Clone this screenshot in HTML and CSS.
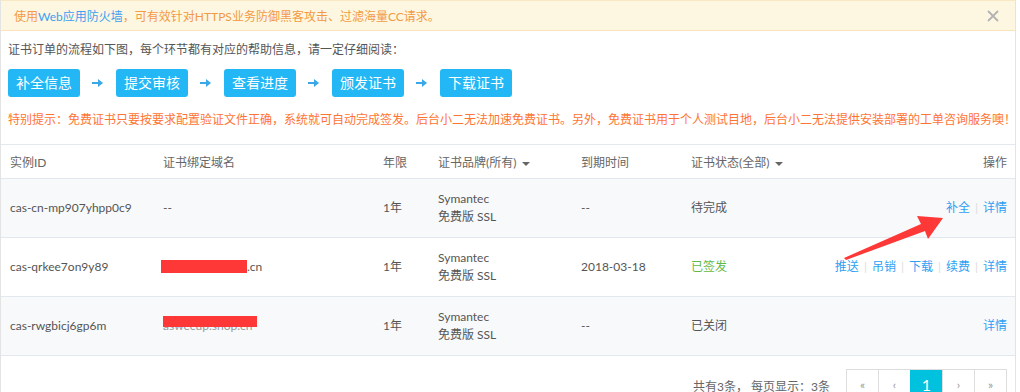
FILE: index.html
```html
<!DOCTYPE html>
<html>
<head>
    <title>证书订单</title>
    <link rel="stylesheet" href="styles.css">
</head>
<body>
    <div class="page">
        <div class="notice">
            <span>使用<a class="notice-link">Web应用防火墙</a>，可有效针对HTTPS业务防御黑客攻击、过滤海量CC请求。</span>
            <svg class="notice-close" width="12" height="12" viewBox="0 0 12 12">
                <path d="M1 1 L11 11 M11 1 L1 11" stroke="#b3b3b3" stroke-width="1.8" fill="none"/>
            </svg>
        </div>

        <div class="intro">证书订单的流程如下图，每个环节都有对应的帮助信息，请一定仔细阅读：</div>

        <div class="steps">
            <div class="step">补全信息</div>
            <svg class="step-arrow" width="11" height="8" viewBox="0 0 11 8"><path d="M0 3 H6 V0 L11 4 L6 8 V5 H0 Z" fill="#3aa7e8"/></svg>
            <div class="step">提交审核</div>
            <svg class="step-arrow" width="11" height="8" viewBox="0 0 11 8"><path d="M0 3 H6 V0 L11 4 L6 8 V5 H0 Z" fill="#3aa7e8"/></svg>
            <div class="step">查看进度</div>
            <svg class="step-arrow" width="11" height="8" viewBox="0 0 11 8"><path d="M0 3 H6 V0 L11 4 L6 8 V5 H0 Z" fill="#3aa7e8"/></svg>
            <div class="step">颁发证书</div>
            <svg class="step-arrow" width="11" height="8" viewBox="0 0 11 8"><path d="M0 3 H6 V0 L11 4 L6 8 V5 H0 Z" fill="#3aa7e8"/></svg>
            <div class="step">下载证书</div>
        </div>

        <div class="warning">特别提示：免费证书只要按要求配置验证文件正确，系统就可自动完成签发。后台小二无法加速免费证书。另外，免费证书用于个人测试目地，后台小二无法提供安装部署的工单咨询服务噢！</div>

        <div class="table-wrap">
            <table class="cert-table">
                <colgroup>
                    <col style="width:153px">
                    <col style="width:220px">
                    <col style="width:55px">
                    <col style="width:143px">
                    <col style="width:110px">
                    <col style="width:130px">
                    <col>
                </colgroup>
                <thead>
                    <tr>
                        <th>实例ID</th>
                        <th>证书绑定域名</th>
                        <th>年限</th>
                        <th>证书品牌(所有) <span class="caret"></span></th>
                        <th>到期时间</th>
                        <th>证书状态(全部) <span class="caret"></span></th>
                        <th class="ops">操作</th>
                    </tr>
                </thead>
                <tbody>
                    <tr class="odd">
                        <td>cas-cn-mp907yhpp0c9</td>
                        <td>--</td>
                        <td>1年</td>
                        <td>Symantec<br>免费版 SSL</td>
                        <td>--</td>
                        <td>待完成</td>
                        <td class="ops"><a>补全</a><span class="sep">|</span><a>详情</a></td>
                    </tr>
                    <tr>
                        <td>cas-qrkee7on9y89</td>
                        <td><span class="redact-box"></span>.cn</td>
                        <td>1年</td>
                        <td>Symantec<br>免费版 SSL</td>
                        <td>2018-03-18</td>
                        <td class="ok">已签发</td>
                        <td class="ops"><a>推送</a><span class="sep">|</span><a>吊销</a><span class="sep">|</span><a>下载</a><span class="sep">|</span><a>续费</a><span class="sep">|</span><a>详情</a></td>
                    </tr>
                    <tr class="odd">
                        <td>cas-rwgbicj6gp6m</td>
                        <td><span class="domain"><span class="faint">aswecup.shop.cn</span><span class="redact"></span></span></td>
                        <td>1年</td>
                        <td>Symantec<br>免费版 SSL</td>
                        <td>--</td>
                        <td>已关闭</td>
                        <td class="ops"><a>详情</a></td>
                    </tr>
                </tbody>
            </table>

            <!-- 标注箭头 -->
            <svg class="mark-arrow" width="110" height="60" viewBox="0 0 110 60">
                <path d="M1 58 L78 24 L74 16 L100 18 L85 39 L82 31 L3 60 Z" fill="#fe3737"/>
            </svg>
        </div>

        <div class="pager-row">
            <span class="pager-info">共有3条， 每页显示：3条</span>
            <div class="pager">
                <span class="pg">«</span>
                <span class="pg">‹</span>
                <span class="pg active">1</span>
                <span class="pg">›</span>
                <span class="pg">»</span>
            </div>
        </div>
    </div>
</body>
</html>
```

FILE: styles.css
```css
body {
    margin: 0;
    font-family: Lato, "Noto Sans CJK SC", sans-serif;
    font-size: 12px;
    color: #555;
    background: #fff;
}
.page {
    width: 1014px;
    height: 392px;
    border-left: 1px solid #e3e3e3;
    border-right: 1px solid #e3e3e3;
    overflow: hidden;
}
.notice {
    height: 29px;
    background-color: #fdf7e1;
    border-top: 1px solid #f9e9c3;
    border-bottom: 1px solid #f9e3bc;
    display: flex;
    align-items: center;
    justify-content: space-between;
    padding: 0 16px 0 13px;
    color: #f39a45;
}
.notice-link {
    color: #3c9ff0;
}
.intro {
    margin-top: 9px;
    padding: 0 7px;
    line-height: 20px;
    color: #555;
}
.steps {
    display: flex;
    align-items: center;
    margin-top: 9px;
    padding: 0 7px;
}
.step {
    width: 72px;
    height: 28px;
    line-height: 28px;
    text-align: center;
    background-color: #24b7f5;
    color: #fff;
    font-size: 14px;
    border-radius: 3px;
}
.step-arrow {
    margin: 0 13px 0 12px;
}
.warning {
    margin-top: 13px;
    padding: 0 7px;
    line-height: 20px;
    color: #ff7433;
    white-space: nowrap;
}
.table-wrap {
    position: relative;
    margin-top: 14px;
}
.cert-table {
    width: 100%;
    table-layout: fixed;
    border-collapse: collapse;
}
.cert-table th,
.cert-table td {
    text-align: left;
    padding: 0 8px 0 9px;
    white-space: nowrap;
}
.cert-table th {
    font-weight: normal;
    color: #666;
    height: 33px;
    border-top: 1px solid #e3e8ee;
    border-bottom: 1px solid #e3e8ee;
}
.cert-table td {
    height: 58px;
    line-height: 18px;
    border-bottom: 1px solid #e3e8ee;
}
.cert-table tr.odd td {
    background-color: #f8f9fb;
}
.cert-table .ops {
    text-align: right;
}
.ops a {
    color: #2f9ff2;
}
.sep {
    color: #ddd;
    margin: 0 5px;
}
.ok {
    color: #63b946;
}
.caret {
    display: inline-block;
    width: 0;
    height: 0;
    border-left: 4px solid transparent;
    border-right: 4px solid transparent;
    border-top: 4px solid #666;
    vertical-align: middle;
    margin-left: 3px;
}
.redact-box {
    display: inline-block;
    width: 86px;
    height: 13px;
    margin-left: -2px;
    vertical-align: -2px;
    background-color: #fe3737;
}
.domain {
    position: relative;
    display: inline-block;
}
.faint {
    color: #999;
}
.redact {
    position: absolute;
    left: 0;
    right: -4px;
    top: -1px;
    bottom: 8px;
    background-color: #fe3737;
}
.mark-arrow {
    position: absolute;
    left: 842px;
    top: 56px;
}
.pager-row {
    display: flex;
    justify-content: flex-end;
    align-items: center;
    margin-top: 13px;
    padding-right: 8px;
}
.pager-info {
    color: #666;
    margin-right: 16px;
}
.pager {
    display: flex;
    border: 1px solid #ddd;
}
.pg {
    width: 31px;
    height: 30px;
    line-height: 30px;
    text-align: center;
    color: #999;
    border-left: 1px solid #ddd;
    font-size: 12px;
}
.pg:first-child {
    border-left: none;
}
.pg.active {
    background-color: #00c1de;
    color: #fff;
    font-size: 16px;
    border-color: #00c1de;
}
```
